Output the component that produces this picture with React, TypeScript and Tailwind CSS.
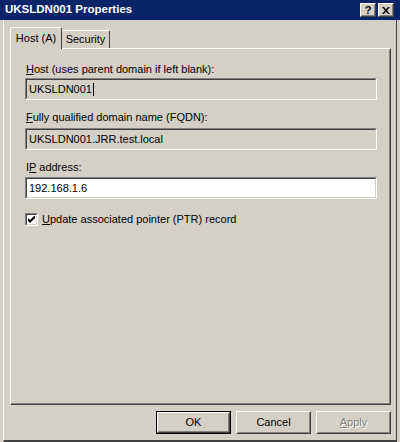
import React from "react";

const font = { fontFamily: '"Liberation Sans", Arial, sans-serif' };

function Sunken({ children, white }: { children: React.ReactNode; white?: boolean }) {
  return (
    <div className="border border-[#808080] border-r-white border-b-white w-[352px] h-[22px]">
      <div
        className={`border border-[#404040] border-r-[#d4d0c8] border-b-[#d4d0c8] h-full flex items-center pl-[2px] ${
          white ? "bg-white" : "bg-[#d4d0c8]"
        }`}
      >
        {children}
      </div>
    </div>
  );
}

function Btn({ children, def, disabled }: { children: React.ReactNode; def?: boolean; disabled?: boolean }) {
  const inner = (
    <div className="border border-white border-r-[#404040] border-b-[#404040] h-full">
      <div className="border border-transparent border-r-[#808080] border-b-[#808080] h-full flex items-center justify-center">
        <span
          className={disabled ? "text-[#808080] [text-shadow:1px_1px_0_#ffffff]" : "text-black"}
        >
          {children}
        </span>
      </div>
    </div>
  );
  return (
    <div className={`w-[75px] h-[23px] ${def ? "border border-black" : ""}`}>{inner}</div>
  );
}

function TitleBtn({ children }: { children: React.ReactNode }) {
  return (
    <div className="w-[16px] h-[14px] bg-[#d4d0c8] border border-white border-r-[#404040] border-b-[#404040]">
      <div className="h-full border border-transparent border-r-[#808080] border-b-[#808080] flex items-center justify-center">
        {children}
      </div>
    </div>
  );
}

export default function App() {
  return (
    <div
      className="w-[400px] h-[442px] bg-[#d4d0c8] flex flex-col text-[11px] text-black overflow-hidden"
      style={font}
    >
      {/* Title bar */}
      <div className="h-[20px] bg-[#0a246a] flex items-center pl-[5px] pr-[6px] shrink-0">
        <span className="text-white font-bold text-[11.5px] flex-1">UKSLDN001 Properties</span>
        <div className="flex gap-[2px] items-center">
          <TitleBtn>
            <span className="font-bold text-[11px] leading-none">?</span>
          </TitleBtn>
          <TitleBtn>
            <svg width="8" height="7" viewBox="0 0 8 7">
              <path d="M0 0h2l2 2.5L6 0h2L5 3.5 8 7H6L4 4.5 2 7H0l3-3.5z" fill="#000" />
            </svg>
          </TitleBtn>
        </div>
      </div>

      {/* Body */}
      <div className="flex-1 flex flex-col border-l border-white border-b-2 border-b-[#404040] ml-[3px] mr-[3px] border-r border-r-[#404040]">
        <div className="flex flex-col pl-[6px] pr-[5px] pt-[6px]">
          {/* tabs */}
          <div className="flex items-end h-[22px] relative z-10">
            <div className="h-[22px] w-[52px] bg-[#d4d0c8] border-t border-l border-white border-r border-r-[#404040] rounded-t-[2px] flex items-center justify-center -mb-[1px] pb-[1px]">
              Host (A)
            </div>
            <div className="h-[18px] w-[48px] border-t border-white border-r border-r-[#404040] rounded-t-[2px] flex items-center justify-center">
              Security
            </div>
          </div>
          {/* panel */}
          <div className="h-[357px] border border-white border-r-[#404040] border-b-[#404040]">
            <div className="h-full border border-transparent border-r-[#808080] border-b-[#808080] pl-[13px] pt-[13px] flex flex-col">
              <div className="ml-[1px] h-[13px] leading-[13px]">
                <span className="underline">H</span>ost (uses parent domain if left blank):
              </div>
              <div className="mt-[2px]">
                <Sunken>
                  <span>UKSLDN001</span>
                  <span className="inline-block w-[1px] h-[13px] bg-black ml-[1px]" />
                </Sunken>
              </div>
              <div className="ml-[1px] h-[13px] leading-[13px] mt-[11px]">
                <span className="underline">F</span>ully qualified domain name (FQDN):
              </div>
              <div className="mt-[4px]">
                <Sunken>UKSLDN001.JRR.test.local</Sunken>
              </div>
              <div className="ml-[1px] h-[13px] leading-[13px] mt-[11px]">
                I<span className="underline">P</span> address:
              </div>
              <div className="mt-[3px]">
                <Sunken white>192.168.1.6</Sunken>
              </div>
              <div className="flex items-center mt-[14px] gap-[4px]">
                <div className="w-[13px] h-[13px] border border-[#808080] border-r-white border-b-white">
                  <div className="w-full h-full bg-white border border-[#404040] border-r-[#d4d0c8] border-b-[#d4d0c8] flex items-center justify-center">
                    <svg width="7" height="7" viewBox="0 0 7 7">
                      <path d="M0 2v3l2 2 5-5V-1L2 4z" fill="#000" />
                    </svg>
                  </div>
                </div>
                <span className="leading-[13px]">
                  <span className="underline">U</span>pdate associated pointer (PTR) record
                </span>
              </div>
            </div>
          </div>
        </div>
        {/* buttons */}
        <div className="flex justify-end gap-[5px] pr-[5px] mt-[6px]">
          <Btn def>OK</Btn>
          <Btn>Cancel</Btn>
          <Btn disabled>
            <span className="underline">A</span>pply
          </Btn>
        </div>
      </div>
    </div>
  );
}
